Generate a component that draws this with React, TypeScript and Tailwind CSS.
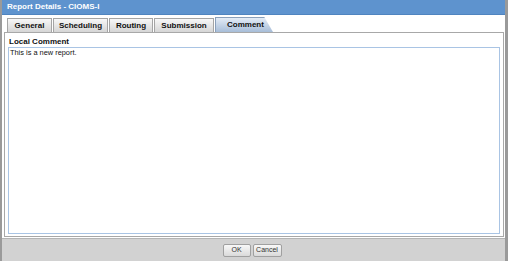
import React from "react";

const tabs: [string, string][] = [
  ["General", "w-[45px]"],
  ["Scheduling", "w-[55px]"],
  ["Routing", "w-[44px]"],
  ["Submission", "w-[60px]"],
];

export default function App() {
  return (
    <div
      className="w-[508px] h-[261px] flex flex-col bg-[#d2d2d2] border-r-[3px] border-l-[2px] border-[#9a9a9a] overflow-hidden"
      style={{ fontFamily: "'Liberation Sans', Arial, sans-serif" }}
    >
      <div className="h-[15px] bg-[#5e93ce] border-b border-[#4f84bf] flex items-center pl-[5px] text-white text-[8px] font-bold">
        Report Details - CIOMS-I
      </div>
      <div className="flex-1 flex flex-col bg-white pl-[2px] pr-[1px] pt-[2px] pb-[1px]">
        <div className="flex items-end h-[15px] pl-[3px] gap-[1px]">
          {tabs.map(([t, w]) => (
            <div
              key={t}
              className={`${w} h-[14px] flex items-center justify-center text-[8px] font-bold text-[#111] bg-gradient-to-b from-[#f7f7f7] to-[#d6d6d6] border border-b-0 border-[#a5a5a5]`}
            >
              {t}
            </div>
          ))}
          <div className="w-[58px] h-[15px] pl-[11px] flex items-center text-[8px] font-bold text-[#111] bg-gradient-to-b from-[#e4ecf6] to-[#a7bdd8] border-l border-t border-[#8aa0bb] [clip-path:polygon(0_0,85%_0,100%_100%,0_100%)]">
            Comment
          </div>
        </div>
        <div className="flex-1 flex flex-col border border-[#a8a8a8] px-[3px] pt-[4px] pb-[2px]">
          <div className="text-[8px] font-bold text-[#111] leading-[9px] pl-[1px]">Local Comment</div>
          <div className="flex-1 border border-[#a9c4e4] mt-[1px] px-[1px] text-[7.4px] text-[#111] leading-[10px]">
            This is a new report.
          </div>
        </div>
      </div>
      <div className="h-[23px] bg-[#d2d2d2] border-t border-[#b4b4b4] flex items-center justify-center gap-[2px] pr-[3px]">
        <div className="w-[28px] h-[13px] flex items-center justify-center text-[7px] text-[#333] bg-gradient-to-b from-[#f8f8f8] to-[#dadada] border border-[#a0a0a0] rounded-[2px]">
          OK
        </div>
        <div className="w-[29px] h-[13px] flex items-center justify-center text-[7px] text-[#333] bg-gradient-to-b from-[#f8f8f8] to-[#dadada] border border-[#a0a0a0] rounded-[2px]">
          Cancel
        </div>
      </div>
    </div>
  );
}
